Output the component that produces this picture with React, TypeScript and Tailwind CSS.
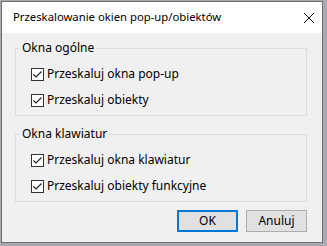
import React from "react";

const font = { fontFamily: '"Noto Sans", "Segoe UI", sans-serif' };

const Check = ({ label }: { label: string }) => (
  <div className="flex items-center h-[16px]">
    <div className="w-[13px] h-[13px] border border-[#333333] bg-white flex items-center justify-center">
      <svg width="11" height="11" viewBox="0 0 11 11">
        <path d="M1.5 5.5 L4 8 L9.5 2.5" fill="none" stroke="#222" strokeWidth="1.2" />
      </svg>
    </div>
    <span className="ml-[3px] text-[12px] text-black leading-[16px]">{label}</span>
  </div>
);

const Group = ({ title, items }: { title: string; items: string[] }) => (
  <fieldset className="border border-[#dcdcdc] ml-[13px] mr-[15px] pl-[4px] pt-[10px] pb-[7px]">
    <legend className="px-[2px] text-[12px] leading-[16px] text-black">{title}</legend>
    <div className="flex flex-col gap-[10px] pl-[11px]">
      {items.map((t) => (
        <Check key={t} label={t} />
      ))}
    </div>
  </fieldset>
);

export default function App() {
  return (
    <div className="w-[327px] h-[246px] bg-[#a9a9b1] pl-[1px] pt-[1px]" style={font}>
      <div className="w-[322px] h-[242px] border border-[#6e6e6e] bg-[#f0f0f0] flex flex-col">
        <div className="h-[31px] bg-white flex items-center justify-between pl-[11px] pr-[7px]">
          <span className="text-[11.3px] text-black">Przeskalowanie okien pop-up/obiektów</span>
          <svg width="12" height="12" viewBox="0 0 12 12">
            <path d="M1 1 L11 11 M11 1 L1 11" stroke="#111" strokeWidth="1" />
          </svg>
        </div>
        <div className="flex flex-col gap-[10px] mt-[7px]">
          <Group title="Okna ogólne" items={["Przeskaluj okna pop-up", "Przeskaluj obiekty"]} />
          <Group title="Okna klawiatur" items={["Przeskaluj okna klawiatur", "Przeskaluj obiekty funkcyjne"]} />
        </div>
        <div className="flex justify-end gap-[8px] pr-[15px] mt-[8px]">
          <button className="w-[61px] h-[22px] bg-[#e1e1e1] border-2 border-[#0078d7] text-[12px] text-black">
            OK
          </button>
          <button className="w-[61px] h-[22px] bg-[#e1e1e1] border border-[#adadad] text-[12px] text-black">
            Anuluj
          </button>
        </div>
      </div>
    </div>
  );
}
